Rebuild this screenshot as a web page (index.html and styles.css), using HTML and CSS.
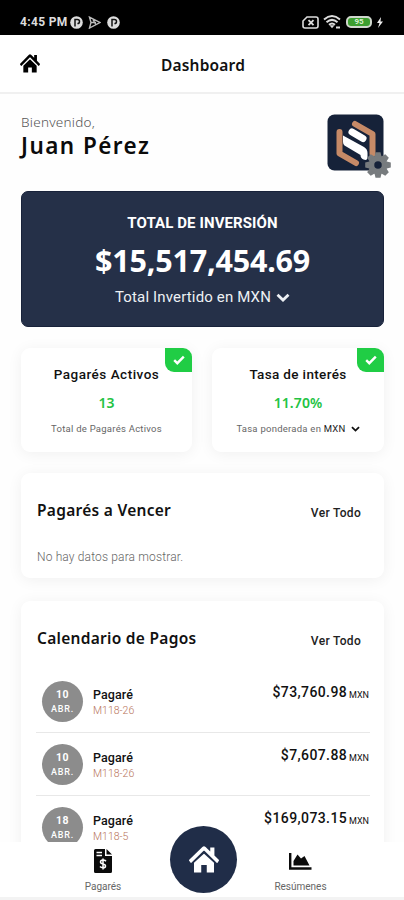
FILE: index.html
```html
<!DOCTYPE html>
<html lang="es">
<head>
<meta charset="utf-8">
<meta name="viewport" content="width=device-width, initial-scale=1">
<title>Dashboard</title>
<link rel="stylesheet" href="styles.css">
</head>
<body>
<svg class="defs" width="0" height="0">
  <symbol id="home" viewBox="0 20 576 470" preserveAspectRatio="none"><path d="M280.37 158L96 312V480H235V352H341V480H480V312L295.67 158a12.19 12.190 0 0 0-15.3 0zM571.6 261L488 186V44.050H408V114L318.470 36a48 48 0 0 0-61 0L4.340 261a12 12 0 0 0-1.600 16.900l25.500 31A12 12 0 0 0 45.150 311l235.220-207a12.190 12.190 0 0 1 15.300 0L530.900 311a12 12 0 0 0 16.900-1.600l25.500-31a12 12 0 0 0-1.700-16.930z"/></symbol>
  <symbol id="down" viewBox="0 0 14 9"><path d="M1.5 1.7 7 7 12.5 1.7" fill="none" stroke="currentColor" stroke-width="2.8"/></symbol>
  <symbol id="check" viewBox="0 0 12 10"><path d="M1.2 5.2 4.3 8.2 10.8 1.6" fill="none" stroke="#fff" stroke-width="2.4"/></symbol>
  <symbol id="pin" viewBox="0 0 13 13"><circle cx="6.5" cy="6.5" r="6.3" fill="#ddd"/><path d="M5 10.5V3.4h2.4a2 2 0 0 1 0 4.2" fill="none" stroke="#111" stroke-width="1.5"/></symbol>
</svg>
<div class="screen">
  <div class="status">
    <span class="time">4:45 PM</span>
    <svg class="s-pin" width="13" height="13"><use href="#pin"/></svg>
    <svg class="s-play" width="13" height="13" viewBox="0 0 13 13" fill="none" stroke="#bbb" stroke-width="1.4"><path d="M1.5 1.2 11.8 6.5 1.5 12 3 6.5zM3 6.5h5M5 3.5 8 9"/></svg>
    <svg class="s-pin" width="13" height="13"><use href="#pin"/></svg>
    <div class="status-right">
      <svg width="17" height="13" viewBox="0 0 17 13" fill="none" stroke="#ddd"><path d="M5 1h9a2 2 0 0 1 2 2v7a2 2 0 0 1-2 2H3a2 2 0 0 1-2-2V5z" stroke-width="1.6"/><path d="m6.500 4.200 5 5m0-5-5 5" stroke-width="1.8"/></svg>
      <svg width="18" height="14" viewBox="0 0 18 14" fill="none" stroke="#ddd" stroke-width="2"><path d="M1 4.400Q9-2.300 17 4.400M3.500 7.200q5.500-4.600 11 0M6 9.700q3-2.500 6 0"/><path d="m6.500 10.300 2.500 3 2.500-3z" fill="#ddd" stroke="none"/><path d="M13 12.500h4"/></svg>
      <div class="battery">95</div>
      <svg class="bolt" width="8" height="11" viewBox="0 0 8 11"><path d="M5 0 1 6h2.500L2 11l5-6.500H4.500z" fill="#eee"/></svg>
    </div>
  </div>
  <header class="topbar">
    <svg class="home-icon" width="20" height="19"><use href="#home"/></svg>
    <h1>Dashboard</h1>
  </header>
  <main>
    <section class="welcome">
      <div>
        <div class="hello">Bienvenido,</div>
        <div class="name">Juan Pérez</div>
      </div>
      <div class="avatar">
        <svg width="57" height="57" viewBox="0 0 57 57">
          <rect x=".5" y=".5" width="56" height="56" rx="7" fill="#162239"/>
          <g fill="none" stroke-linecap="round" stroke-linejoin="round">
            <path d="M28 10 45.500 20v20M12.500 18v21.500L29 49" stroke="#c68a67" stroke-width="6"/>
            <path d="M25 18 36 24.500" stroke="#fff" stroke-width="7"/>
          </g>
          <path d="M16 21.500 37 33q3.500 2 3.500 6v4q0 4-4 2.500-3-1.200-3-4.500L17.500 31.500Q16 30.500 16 28z" fill="#fff"/>
        </svg>
        <svg class="gear" width="26" height="26" viewBox="-13 -13 26 26">
          <g fill="#777b7e"><g id="t"><path d="M-2.500-12.800h5l1.200 5h-7.400zM-2.500 12.800h5l1.200-5h-7.400z"/></g><use href="#t" transform="rotate(45)"/><use href="#t" transform="rotate(90)"/><use href="#t" transform="rotate(135)"/></g>
          <circle r="6.500" fill="none" stroke="#777b7e" stroke-width="5.500"/>
        </svg>
      </div>
    </section>
    <section class="total">
      <div class="total-title">TOTAL DE INVERSIÓN</div>
      <div class="total-amount">$15,517,454.69</div>
      <div class="total-sub"><span>Total Invertido en MXN</span><svg width="14" height="9"><use href="#down"/></svg></div>
    </section>
    <div class="stats">
      <section class="card stat">
        <div class="badge"><svg width="12" height="10"><use href="#check"/></svg></div>
        <h3>Pagarés Activos</h3>
        <div class="value">13</div>
        <div class="note">Total de Pagarés Activos</div>
      </section>
      <section class="card stat">
        <div class="badge"><svg width="12" height="10"><use href="#check"/></svg></div>
        <h3 class="rate">Tasa de interés</h3>
        <div class="value">11.70%</div>
        <div class="note"><span>Tasa ponderada en <b>MXN</b></span><svg width="9" height="6"><use href="#down"/></svg></div>
      </section>
    </div>
    <section class="card due">
      <div class="card-head"><h2>Pagarés a Vencer</h2><a>Ver Todo</a></div>
      <p>No hay datos para mostrar.</p>
    </section>
    <section class="card calendar">
      <div class="card-head"><h2>Calendario de Pagos</h2><a>Ver Todo</a></div>
      <div class="row"><div class="date"><b>10</b><span>ABR.</span></div><div class="what"><div>Pagaré</div><small>M118-26</small></div><div class="sum">$73,760.98 <small>MXN</small></div></div>
      <div class="row"><div class="date"><b>10</b><span>ABR.</span></div><div class="what"><div>Pagaré</div><small>M118-26</small></div><div class="sum">$7,607.88 <small>MXN</small></div></div>
      <div class="row"><div class="date"><b>18</b><span>ABR.</span></div><div class="what"><div>Pagaré</div><small>M118-5</small></div><div class="sum">$169,073.15 <small>MXN</small></div></div>
    </section>
  </main>
  <nav>
    <div class="tab">
      <svg width="18" height="24" viewBox="0 0 18 24"><path d="M0 1.500Q0 0 1.500 0H11v7h7v15.500q0 1.500-1.500 1.500h-15Q0 24 0 22.500z" fill="#0b0b0b"/><path d="M12.500 0 18 5.500h-5.500z" fill="#0b0b0b"/><path d="M2.500 3.500H8M2.500 6.500H8" stroke="#fff" stroke-width="1.300"/><path d="M12 12.200q-1-1.200-3-1.200-2.500 0-2.500 1.900 0 1.500 2.500 2t2.500 2q0 1.900-2.500 1.900-2 0-3-1.200M9 9.500v11" fill="none" stroke="#fff" stroke-width="1.500"/></svg>
      <span>Pagarés</span>
    </div>
    <div class="fab"><svg width="30" height="27" fill="#fff"><use href="#home"/></svg></div>
    <div class="tab">
      <svg width="23" height="18" viewBox="0 0 23 18"><path d="M1.200 1v15.500H22.500" fill="none" stroke="#0b0b0b" stroke-width="2.400"/><path d="M4.500 13.500V9L8.500 2.500 12 6.500 15.500 4 20.500 13.500z" fill="#0b0b0b"/></svg>
      <span>Resúmenes</span>
    </div>
  </nav>
</div>
</body>
</html>
```
FILE: styles.css
```css
* { box-sizing: border-box; margin: 0; padding: 0; }
body { background: #fff; font-family: Roboto, sans-serif; color: #111; }
.defs { position: absolute; }
.screen { width: 404px; height: 900px; display: flex; flex-direction: column; overflow: hidden; background: #fefefe; }
svg { display: block; flex: none; }

.status { flex: none; height: 35px; background: #000; display: flex; align-items: center; padding: 9px 20px 0; color: #ddd; }
.time { font-size: 12px; font-weight: 700; width: 50px; white-space: nowrap; letter-spacing: .35px; }
.s-play { margin: 0 6px 0 5px; }
.status-right { display: flex; align-items: center; margin-left: auto; gap: 4px; }
.battery { width: 26px; height: 12px; border: 2px solid #cfd6cc; border-radius: 5px; background: #3c9e2f; color: #d8f0d0; font-size: 8px; line-height: 8px; text-align: center; font-weight: 700; margin-left: 1px; }

.topbar { flex: none; height: 59px; border-bottom: 2px solid #f0f0f0; display: grid; grid-template-columns: 40px 1fr 40px; align-items: center; padding: 0 20px; background: #fff; }
.topbar h1 { font: 600 15.500px/24px "Noto Sans", sans-serif; letter-spacing: .2px; text-align: center; padding: 2px 0 0 2px; }

main { flex: 1; min-height: 0; overflow: hidden; padding: 19px 20px 0 21px; }
.welcome { display: flex; justify-content: space-between; height: 78px; }
.hello { font: 300 13.500px/19px "Noto Sans", sans-serif; letter-spacing: .25px; color: #555; }
.name { font: 600 22.500px/26px "Noto Sans", sans-serif; letter-spacing: 1.450px; color: #0b0b0b; margin-top: 1px; }
.avatar { position: relative; width: 57px; height: 57px; margin-top: 1px; }
.gear { position: absolute; left: 38px; top: 38px; }

.total { height: 136px; background: #253048; border: 1px solid #18223a; border-radius: 7px; color: #fff; text-align: center; padding-top: 20px; }
.total-title { font-size: 15px; line-height: 22px; font-weight: 700; letter-spacing: .1px; }
.total-amount { font: 700 30.500px/38px "Noto Sans", sans-serif; margin-top: 7px; letter-spacing: -.2px; }
.total-sub { display: flex; justify-content: center; align-items: center; gap: 5px; font-size: 15px; line-height: 20px; margin-top: 8px; letter-spacing: .15px; color: #edf0f4; }

.card { background: #fff; border-radius: 9px; box-shadow: 0 2px 15px rgba(0, 0, 0, .06); }
.stats { display: grid; grid-template-columns: 171px 172px; justify-content: space-between; margin-top: 21px; }
.stat { position: relative; height: 104px; text-align: center; padding-top: 16px; }
.stat h3 { font-size: 13.500px; font-weight: 500; line-height: 20px; letter-spacing: .5px; }
.stat .rate { letter-spacing: .35px; }
.badge { position: absolute; right: 0; top: 0; width: 27px; height: 24px; border-radius: 0 9px 0 9px; background: #20cd45; display: grid; place-items: center; }
.value { color: #23c343; font: 600 14px/20px "Noto Sans", sans-serif; margin-top: 9px; letter-spacing: .1px; }
.note { display: flex; justify-content: center; align-items: center; gap: 5px; font-size: 9.500px; line-height: 14px; margin-top: 9px; color: #666; letter-spacing: .25px; }
.note b { font-weight: 400; color: #222; }
.note svg { color: #111; }

.due { height: 105px; margin-top: 21px; padding: 25px 16px 0; }
.card-head { display: flex; justify-content: space-between; align-items: center; height: 24px; }
.card-head h2 { font: 600 15.500px/24px "Noto Sans", sans-serif; letter-spacing: .28px; }
.card-head a { font-size: 12px; line-height: 16px; font-weight: 500; letter-spacing: .3px; color: #222; padding: 6px 7px 0 0; }
.due p { font-size: 12px; line-height: 16px; font-weight: 300; color: #666; margin-top: 27px; letter-spacing: .15px; }

.calendar { height: 300px; margin-top: 23px; padding: 25px 14px 0 15px; }
.calendar .card-head { padding-left: 1px; padding-right: 2px; }
.calendar .row { height: 63px; display: flex; padding: 10px 1px 0 6px; border-bottom: 1px solid #e8e8e8; }
.calendar .card-head + .row { margin-top: 20px; }
.date { width: 41px; height: 41px; margin-top: 1px; border-radius: 50%; background: #8c8c8c; color: #fff; display: flex; flex-direction: column; align-items: center; justify-content: center; font-size: 10.500px; line-height: 14px; font-weight: 500; letter-spacing: .6px; }
.date span { font-size: 9px; letter-spacing: .8px; }
.what { margin-left: 10px; font-size: 12.500px; font-weight: 500; line-height: 16px; padding-top: 7px; letter-spacing: .1px; }
.what small { display: block; font-size: 10.500px; line-height: 15px; font-weight: 300; letter-spacing: 0; color: #b8745a; }
.sum { margin-left: auto; padding-top: 2px; font-size: 14px; line-height: 20px; font-weight: 500; letter-spacing: .4px; white-space: nowrap; }
.sum small { font-size: 9px; font-weight: 400; letter-spacing: 0; position: relative; top: 1px; margin-left: -2px; }

nav { flex: none; height: 58px; border-bottom: 3px solid #f3f3f3; background: #fff; display: grid; grid-template-columns: 132px 67px 129px; justify-content: center; position: relative; }
.tab { display: flex; flex-direction: column; align-items: center; justify-content: space-between; font-size: 10px; line-height: 12px; color: #666; padding: 7px 2px 4px 0; height: 55px; }
.tab:last-child { padding-top: 10px; }
.fab { width: 67px; height: 67px; border-radius: 50%; background: #202d48; margin-top: -16px; display: grid; place-items: center; }
```
